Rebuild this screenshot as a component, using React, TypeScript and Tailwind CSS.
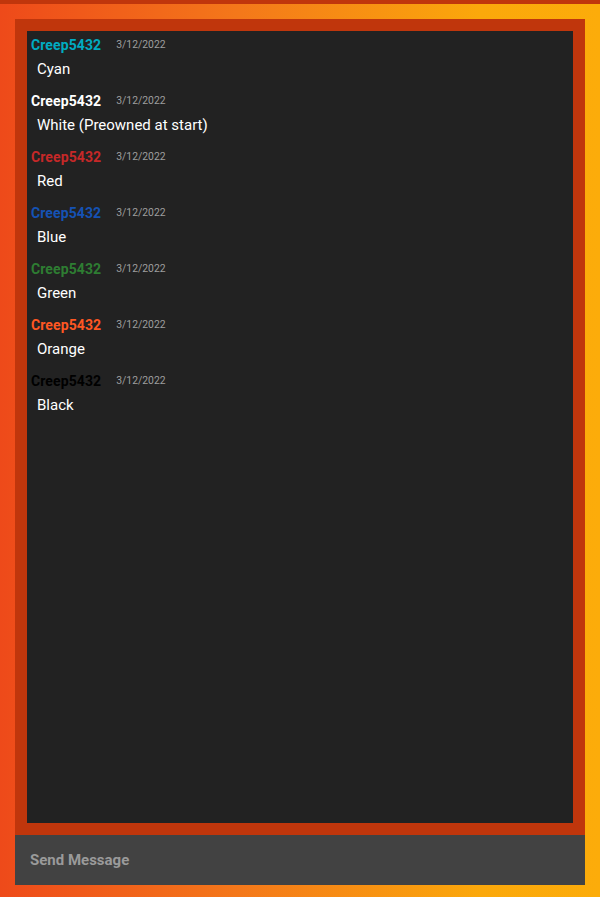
import React from "react";

const msgs = [
  { color: "text-[#00acc1]", text: "Cyan" },
  { color: "text-white", text: "White (Preowned at start)" },
  { color: "text-[#c62828]", text: "Red" },
  { color: "text-[#1552b4]", text: "Blue" },
  { color: "text-[#2e7d32]", text: "Green" },
  { color: "text-[#ff5722]", text: "Orange" },
  { color: "text-black", text: "Black" },
];

export default function App() {
  return (
    <div
      className="flex h-[897px] w-full flex-col border-t-[4px] border-[#c0360c] bg-[linear-gradient(to_right,#ee4a1a,#f4781a_40%,#fba80b_80%,#fcac0a)] px-[15px] pt-[15px] pb-[12px]"
      style={{ fontFamily: "Roboto, 'Noto Sans', sans-serif" }}
    >
      <div className="flex flex-1 flex-col bg-[#c0360c] p-[12px]">
        <div className="flex-1 bg-[#222222] px-[4px] pt-[4px]">
          {msgs.map((m, i) => (
            <div key={i} className="mb-[12px]">
              <div className="flex h-[20px] items-center">
                <span className={`text-[14px] font-bold leading-[20px] tracking-[0.1px] ${m.color}`}>Creep5432</span>
                <span className="ml-[15px] text-[10.4px] leading-[20px] text-[#9e9e9e]">3/12/2022</span>
              </div>
              <div className="mt-[4px] pl-[6px] text-[15px] leading-[20px] text-white">{m.text}</div>
            </div>
          ))}
        </div>
      </div>
      <div className="flex h-[50px] items-center bg-[#424242] pl-[15px]">
        <span className="text-[15px] font-bold text-[#9a9a9a]">Send Message</span>
      </div>
    </div>
  );
}
